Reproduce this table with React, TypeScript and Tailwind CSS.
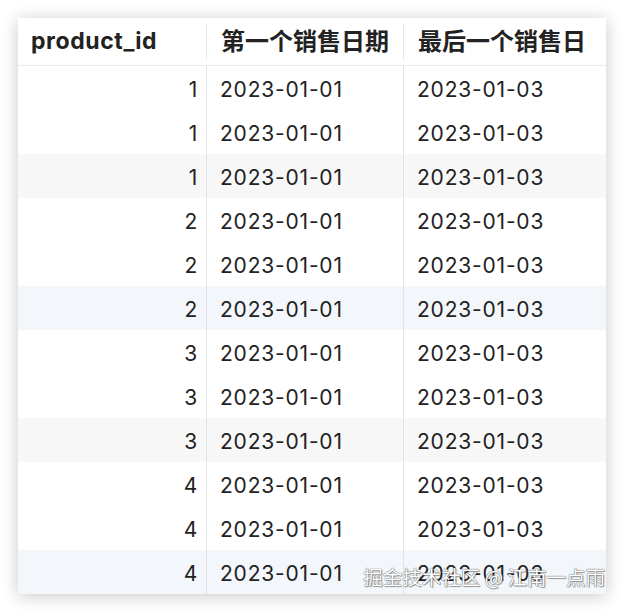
import React from "react";

const rows = [
  { id: 1, a: "2023-01-01", b: "2023-01-03", bg: "" },
  { id: 1, a: "2023-01-01", b: "2023-01-03", bg: "" },
  { id: 1, a: "2023-01-01", b: "2023-01-03", bg: "bg-[#f7f7f7]" },
  { id: 2, a: "2023-01-01", b: "2023-01-03", bg: "" },
  { id: 2, a: "2023-01-01", b: "2023-01-03", bg: "" },
  { id: 2, a: "2023-01-01", b: "2023-01-03", bg: "bg-[#f3f7fb]" },
  { id: 3, a: "2023-01-01", b: "2023-01-03", bg: "" },
  { id: 3, a: "2023-01-01", b: "2023-01-03", bg: "" },
  { id: 3, a: "2023-01-01", b: "2023-01-03", bg: "bg-[#f7f7f7]" },
  { id: 4, a: "2023-01-01", b: "2023-01-03", bg: "" },
  { id: 4, a: "2023-01-01", b: "2023-01-03", bg: "" },
  { id: 4, a: "2023-01-01", b: "2023-01-03", bg: "bg-[#f3f7fb]" },
];

const font = {
  fontFamily: '"Inter", "Noto Sans CJK SC", sans-serif',
};

export default function App() {
  return (
    <div className="w-[624px] h-[612px] bg-white p-[18px]" style={font}>
      <div className="relative w-[588px] h-[576px] bg-white shadow-[0_2px_16px_rgba(0,0,0,0.22)] text-[#222]">
        <div className="grid grid-cols-[188px_197px_203px] h-[48px] border-b border-[#ececec] items-center">
          <div className="pl-[13px] text-[23px] tracking-[0.6px] font-bold">product_id</div>
          <div className="pl-[14px] h-[36px] flex items-center border-l border-[#e6e6e6] text-[24px] font-bold">第一个销售日期</div>
          <div className="pl-[14px] h-[36px] flex items-center border-l border-[#e6e6e6] text-[24px] font-bold">最后一个销售日</div>
        </div>
        {rows.map((r, i) => (
          <div key={i} className={`grid grid-cols-[188px_197px_203px] h-[44px] items-stretch text-[21px] tracking-[0.8px] ${r.bg}`}>
            <div className="pr-[8px] pt-[3px] flex items-center justify-end">{r.id}</div>
            <div className="pl-[13px] pt-[3px] flex items-center border-l border-[#e3e3e3]">{r.a}</div>
            <div className="pl-[13px] pt-[3px] flex items-center border-l border-[#e3e3e3]">{r.b}</div>
          </div>
        ))}
        <div
          className="absolute right-[1px] bottom-[3px] text-[19.5px] text-white whitespace-nowrap"
          style={{
            fontFamily: '"Noto Sans CJK SC", sans-serif',
            textShadow:
              "0 0 1px #666, 0 0 1px #666, 1px 1px 1px rgba(0,0,0,0.35)",
          }}
        >
          掘金技术社区 @ 江南一点雨
        </div>
      </div>
    </div>
  );
}
